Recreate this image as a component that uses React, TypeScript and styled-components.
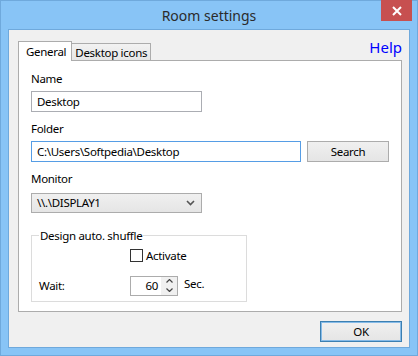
import React from 'react';
import styled, { createGlobalStyle } from 'styled-components';

const GlobalStyle = createGlobalStyle`
  html, body {
    margin: 0;
    padding: 0;
    background: #88c4f6;
  }
  * {
    box-sizing: border-box;
  }
`;

const Window = styled.div`
  width: 418px;
  height: 356px;
  background: #88c4f6;
  display: flex;
  flex-direction: column;
  font-family: 'Noto Sans', 'Open Sans', sans-serif;
  font-size: 11.5px;
  letter-spacing: -0.3px;
  color: #000;
  border: 1px solid #6fa9dc;
`;

const TitleBar = styled.div`
  height: 29px;
  position: relative;
  display: flex;
  align-items: center;
  justify-content: center;
  font-size: 14px;
  letter-spacing: 0;
  color: #2b2b2b;
`;

const CloseButton = styled.div`
  position: absolute;
  top: -1px;
  right: 5px;
  width: 31px;
  height: 21px;
  background: #c75050;
  display: flex;
  align-items: center;
  justify-content: center;
`;

const Client = styled.div`
  flex: 1;
  margin: 0 7px 7px 7px;
  background: #f0f0f0;
  border: 1px solid #6fa9dc;
  padding: 11px 7px 5px 9px;
  display: flex;
  flex-direction: column;
`;

const TabRow = styled.div`
  display: flex;
  align-items: flex-end;
  height: 20px;
  position: relative;
  z-index: 1;
`;

const Tab = styled.div<{ $active?: boolean }>`
  height: ${(p) => (p.$active ? '20px' : '18px')};
  padding: ${(p) => (p.$active ? '0 5px 0 7px' : '0 3px')};
  display: flex;
  align-items: center;
  background: ${(p) => (p.$active ? '#fff' : 'linear-gradient(#f2f2f2, #e6e6e6)')};
  border: 1px solid #acacac;
  border-bottom: ${(p) => (p.$active ? 'none' : '1px solid #acacac')};
  margin-left: ${(p) => (p.$active ? '0' : '-1px')};
`;

const HelpLink = styled.div`
  margin-left: auto;
  align-self: flex-start;
  margin-top: -4px;
  color: #0000ff;
  font-size: 15px;
  letter-spacing: 0;
`;

const Panel = styled.div`
  height: 252px;
  margin-top: -1px;
  background: #fff;
  border: 1px solid #acacac;
  padding: 9px 12px;
  display: flex;
  flex-direction: column;
`;

const Label = styled.div`
  height: 18px;
  line-height: 18px;
`;

const Row = styled.div`
  display: flex;
  gap: 6px;
  margin-top: 3px;
  margin-bottom: 8px;
`;

const TextBox = styled.div<{ $width: number; $focused?: boolean }>`
  width: ${(p) => p.$width}px;
  height: 21px;
  border: 1px solid ${(p) => (p.$focused ? '#569de5' : '#abadb3')};
  background: #fff;
  padding: 0 5px;
  display: flex;
  align-items: center;
`;

const Button = styled.div<{ $default?: boolean }>`
  width: 82px;
  height: 21px;
  border: 1px solid ${(p) => (p.$default ? '#3c7fb1' : '#acacac')};
  background: linear-gradient(#f0f0f0, #e5e5e5);
  display: flex;
  align-items: center;
  justify-content: center;
  box-shadow: ${(p) => (p.$default ? 'inset 0 0 0 1px #86bbe8' : 'none')};
`;

const Select = styled.div`
  width: 171px;
  height: 20px;
  border: 1px solid #acacac;
  background: linear-gradient(#f0f0f0, #e5e5e5);
  padding: 0 6px 0 5px;
  display: flex;
  align-items: center;
  justify-content: space-between;
  margin-top: 5px;
`;

const GroupBox = styled.fieldset`
  margin: 15px 0 0 0;
  width: 216px;
  height: 76px;
  border: 1px solid #dcdcdc;
  padding: 0 0 0 7px;
  display: flex;
  flex-direction: column;
  legend {
    padding: 0 1px;
    margin-left: 0;
  }
`;

const CheckRow = styled.label`
  display: flex;
  align-items: center;
  gap: 3px;
  margin-left: 91px;
  margin-top: 5px;
`;

const CheckBox = styled.span`
  width: 13px;
  height: 13px;
  border: 1px solid #333;
  background: #fff;
`;

const WaitRow = styled.div`
  display: flex;
  align-items: center;
  margin-top: 13px;
`;

const WaitLabel = styled.span`
  width: 91px;
`;

const Spin = styled.div`
  width: 48px;
  height: 20px;
  border: 1px solid #acacac;
  display: flex;
  background: #fff;
`;

const SpinValue = styled.div`
  flex: 1;
  text-align: right;
  padding-right: 3px;
  line-height: 18px;
`;

const SpinArrows = styled.div`
  width: 16px;
  background: #f0f0f0;
  display: flex;
  flex-direction: column;
  align-items: center;
  justify-content: space-around;
`;

const Unit = styled.span`
  margin-left: 6px;
  margin-top: -5px;
`;

const Footer = styled.div`
  display: flex;
  justify-content: flex-end;
  margin-top: 9px;
`;

export default function App() {
  return (
    <>
      <GlobalStyle />
      <Window>
        <TitleBar>
          Room settings
          <CloseButton>
            <svg width="10" height="10" viewBox="0 0 10 10">
              <path d="M1 1 L9 9 M9 1 L1 9" stroke="#fff" strokeWidth="2" />
            </svg>
          </CloseButton>
        </TitleBar>
        <Client>
          <TabRow>
            <Tab $active>General</Tab>
            <Tab>Desktop icons</Tab>
            <HelpLink>Help</HelpLink>
          </TabRow>
          <Panel>
            <Label>Name</Label>
            <Row>
              <TextBox $width={171}>Desktop</TextBox>
            </Row>
            <Label>Folder</Label>
            <Row>
              <TextBox $width={270} $focused>
                C:\Users\Softpedia\Desktop
              </TextBox>
              <Button>Search</Button>
            </Row>
            <Label>Monitor</Label>
            <Select>
              <span>\\.\DISPLAY1</span>
              <svg width="9" height="6" viewBox="0 0 9 6">
                <path d="M1 1 L4.5 4.5 L8 1" stroke="#555" strokeWidth="1.6" fill="none" />
              </svg>
            </Select>
            <GroupBox>
              <legend>Design auto. shuffle</legend>
              <CheckRow>
                <CheckBox />
                Activate
              </CheckRow>
              <WaitRow>
                <WaitLabel>Wait:</WaitLabel>
                <Spin>
                  <SpinValue>60</SpinValue>
                  <SpinArrows>
                    <svg width="7" height="4" viewBox="0 0 7 4">
                      <path d="M0.5 3.5 L3.5 0.5 L6.5 3.5" stroke="#444" strokeWidth="1.2" fill="none" />
                    </svg>
                    <svg width="7" height="4" viewBox="0 0 7 4">
                      <path d="M0.5 0.5 L3.5 3.5 L6.5 0.5" stroke="#444" strokeWidth="1.2" fill="none" />
                    </svg>
                  </SpinArrows>
                </Spin>
                <Unit>Sec.</Unit>
              </WaitRow>
            </GroupBox>
          </Panel>
          <Footer>
            <Button $default>OK</Button>
          </Footer>
        </Client>
      </Window>
    </>
  );
}
